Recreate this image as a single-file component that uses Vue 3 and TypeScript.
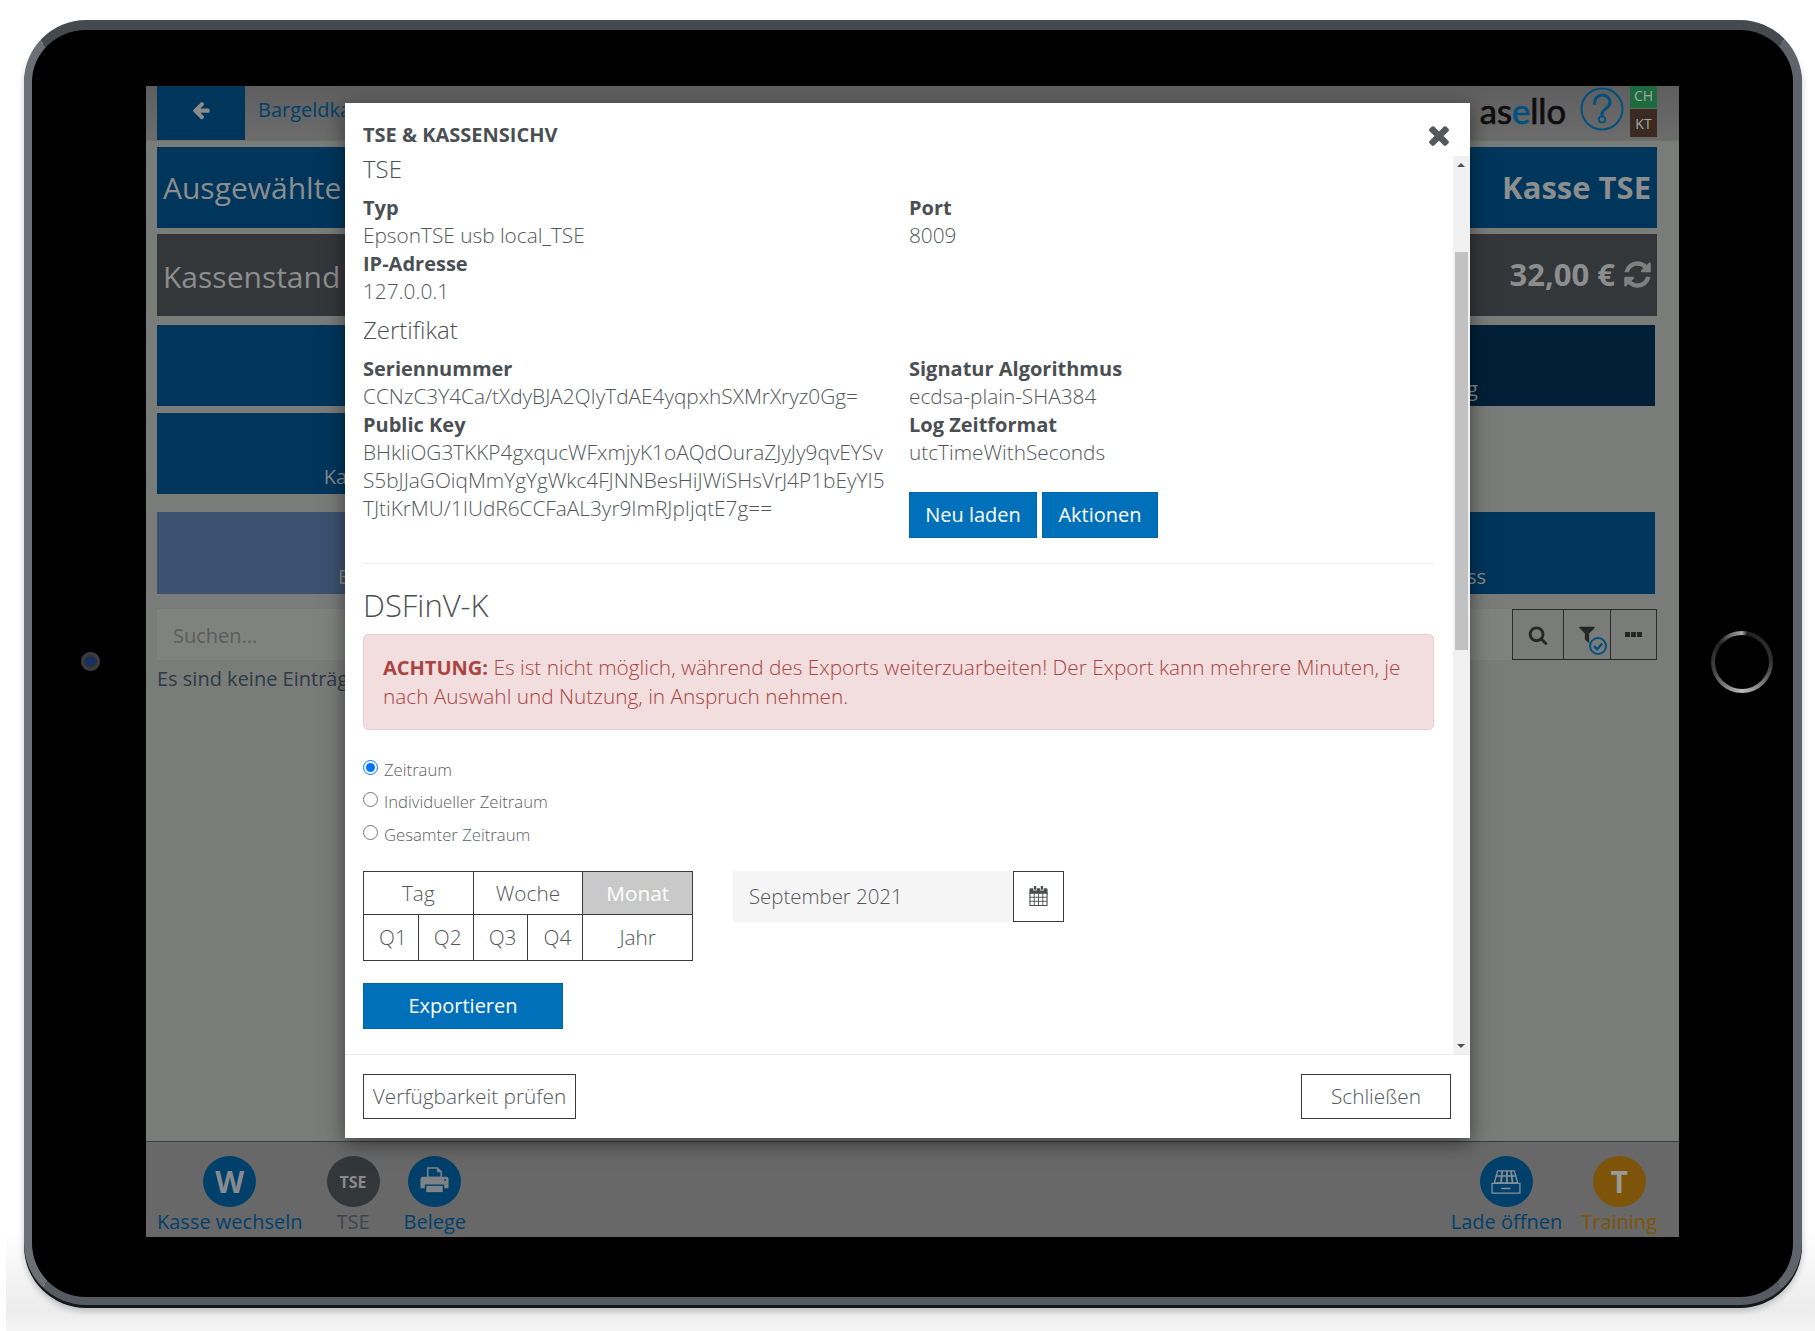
<script setup lang="ts">
const paths: Record<string, string> = {
  arrow: 'M1664 896v128q0 53-32.5 90.5t-84.5 37.5h-704l293 294q38 36 38 90t-38 90l-75 76q-37 37-90 37-52 0-91-37l-651-652q-37-37-37-90 0-52 37-91l651-650q38-38 91-38 52 0 90 38l75 74q38 38 38 91t-38 91l-293 293h704q52 0 84.5 37.5t32.5 90.5z',
  times: 'M1490 1322q0 40-28 68l-136 136q-28 28-68 28t-68-28l-294-294-294 294q-28 28-68 28t-68-28l-136-136q-28-28-28-68t28-68l294-294-294-294q-28-28-28-68t28-68l136-136q28-28 68-28t68 28l294 294 294-294q28-28 68-28t68 28l136 136q28 28 28 68t-28 68l-294 294 294 294q28 28 28 68z',
  refresh: 'M1639 1056q0 5-1 7-64 268-268 434.5t-478 166.5q-146 0-282.5-55t-243.5-157l-129 129q-19 19-45 19t-45-19-19-45v-448q0-26 19-45t45-19h448q26 0 45 19t19 45-19 45l-137 137q71 66 161 102t187 36q134 0 250-65t186-179q11-17 53-117 8-23 30-23h192q13 0 22.5 9.5t9.5 22.5zm25-800v448q0 26-19 45t-45 19h-448q-26 0-45-19t-19-45 19-45l138-138q-148-137-349-137-134 0-250 65t-186 179q-11 17-53 117-8 23-30 23h-199q-13 0-22.5-9.5t-9.5-22.5v-7q65-268 270-434.5t480-166.5q146 0 284 55.5t245 156.5l130-129q19-19 45-19t45 19 19 45z',
  search: 'M1216 832q0-185-131.5-316.5t-316.5-131.5-316.5 131.5-131.5 316.5 131.5 316.5 316.5 131.5 316.5-131.5 131.5-316.5zm512 832q0 52-38 90t-90 38q-54 0-90-38l-343-342q-179 124-399 124-143 0-273.5-55.5t-225-150-150-225-55.5-273.5 55.5-273.5 150-225 225-150 273.5-55.5 273.5 55.5 225 150 150 225 55.5 273.5q0 220-124 399l343 343q37 37 37 90z',
  filter: 'M1595 295q17 41-14 70l-493 493v742q0 42-39 59-13 5-25 5-27 0-45-19l-256-256q-19-19-19-45v-486l-493-493q-31-29-14-70 17-39 59-39h1280q42 0 59 39z',
}
const topPeriods = ['Tag', 'Woche', 'Monat']
const quarters = ['Q1', 'Q2', 'Q3', 'Q4', 'Jahr']
const radios = ['Zeitraum', 'Individueller Zeitraum', 'Gesamter Zeitraum']
</script>

<template>
  <div class="page">
    <div class="tablet">
      <div class="side"><span class="camera"></span></div>
      <div class="screen">
        <header class="bar">
          <div class="back">
            <svg viewBox="0 0 1792 1792" class="ic-back"><path :d="paths.arrow" /></svg>
          </div>
          <span class="crumb">Bargeldkasse</span>
          <div class="bar-right">
            <span class="logo">as<b>e</b>llo</span>
            <svg class="help" viewBox="0 0 44 44">
              <circle cx="22" cy="22" r="20.5" />
              <path d="M14.5 16.500c0-5 3.300-8.500 7.800-8.500s7.700 3 7.700 7c0 3-1.800 4.800-3.800 6.300-2.200 1.600-4.200 3-4.200 5.700v1" />
              <circle cx="22" cy="32.500" r="3.200" />
            </svg>
            <div class="badges">
              <span class="ch">CH</span>
              <span class="kt">KT</span>
            </div>
          </div>
        </header>

        <div class="strip blue">
          <span>Ausgewählte Kasse</span>
          <strong>Kasse TSE</strong>
        </div>
        <div class="strip dark">
          <span>Kassenstand</span>
          <strong class="amount">32,00 €
            <svg viewBox="0 0 1792 1792"><path :d="paths.refresh" /></svg>
          </strong>
        </div>

        <div class="tiles">
          <div class="tile"></div>
          <div class="tile"></div>
          <div class="tile deep">Kassenprüfung</div>
          <div class="tile">Kassenprotokolle</div>
          <div class="tile"></div>
          <div></div>
          <div class="tile pale">Bargeldzählen</div>
          <div class="tile"></div>
          <div class="tile">Kassenabschluss</div>
        </div>

        <div class="search">
          <div class="search-input">Suchen...</div>
          <div class="tools">
            <span class="tool t-search"><svg viewBox="0 0 1792 1792"><path :d="paths.search" /></svg></span>
            <span class="tool t-filter">
              <svg class="funnel" viewBox="0 0 1792 1792"><path :d="paths.filter" /></svg>
              <svg class="check" viewBox="0 0 20 20">
                <circle cx="10" cy="10" r="8" />
                <path d="M6 10.200l3 3 5.200-5.600" />
              </svg>
            </span>
            <span class="tool t-more"><i></i><i></i><i></i></span>
          </div>
        </div>
        <p class="empty">Es sind keine Einträge vorhanden</p>

        <footer class="dock">
          <div class="dock-group">
            <div class="dock-item"><span class="round navy big">W</span><span class="lbl">Kasse wechseln</span></div>
            <div class="dock-item"><span class="round slate small">TSE</span><span class="lbl grey">TSE</span></div>
            <div class="dock-item">
              <span class="round navy">
                <svg class="printer" viewBox="0 0 32 32">
                  <path d="M9 12V2h10l4 4v6z" fill="none" stroke="#7d8386" stroke-width="1.600" />
                  <path d="M18.500 2v4.500H23" fill="#7d8386" />
                  <path d="M4 11h24c1.500 0 2.500 1 2.500 2.500V23H26v-4H6v4H1.500v-9.500C1.500 12 2.500 11 4 11z" fill="#7d8386" />
                  <path d="M7.500 20.500h17V27h-17z" fill="#7d8386" />
                  <circle cx="27" cy="14.500" r="1" fill="#00406b" />
                </svg>
              </span>
              <span class="lbl">Belege</span>
            </div>
          </div>
          <div class="dock-group right">
            <div class="dock-item">
              <span class="round navy">
                <svg class="drawer" viewBox="0 0 32 28" fill="none" stroke="#8a9094" stroke-width="1.400">
                  <path d="M7 2h18l3.500 13h-25z" />
                  <path d="M12 2l-1.500 13M17 2v13M21.500 2l1.500 13M5 7.500h22" stroke-width="1.800" />
                  <path d="M1 15.500h30V26H1z" />
                  <path d="M11 21h10" stroke-width="1.600" />
                </svg>
              </span>
              <span class="lbl">Lade öffnen</span>
            </div>
            <div class="dock-item"><span class="round amber big">T</span><span class="lbl amber-t">Training</span></div>
          </div>
        </footer>

        <section class="modal">
          <div class="modal-head">
            <h4>TSE &amp; KASSENSICHV</h4>
            <svg viewBox="0 0 1792 1792" class="close"><path :d="paths.times" /></svg>
          </div>
          <div class="modal-mid">
            <div class="body">
              <h5 class="first">TSE</h5>
              <div class="cols tse">
                <div>
                  <dl>
                    <dt>Typ</dt><dd>EpsonTSE usb local_TSE</dd>
                    <dt>IP-Adresse</dt><dd>127.0.0.1</dd>
                  </dl>
                </div>
                <div>
                  <dl>
                    <dt>Port</dt><dd>8009</dd>
                  </dl>
                </div>
              </div>
              <h5 class="cert">Zertifikat</h5>
              <div class="cols">
                <div>
                  <dl>
                    <dt>Seriennummer</dt><dd>CCNzC3Y4Ca/tXdyBJA2QIyTdAE4yqpxhSXMrXryz0Gg=</dd>
                    <dt>Public Key</dt>
                    <dd>BHkliOG3TKKP4gxqucWFxmjyK1oAQdOuraZJyJy9qvEYSv<br />S5bJJaGOiqMmYgYgWkc4FJNNBesHiJWiSHsVrJ4P1bEyYI5<br />TJtiKrMU/1IUdR6CCFaAL3yr9ImRJpIjqtE7g==</dd>
                  </dl>
                </div>
                <div>
                  <dl>
                    <dt>Signatur Algorithmus</dt><dd>ecdsa-plain-SHA384</dd>
                    <dt>Log Zeitformat</dt><dd>utcTimeWithSeconds</dd>
                  </dl>
                  <div class="actions">
                    <button class="primary neu">Neu laden</button>
                    <button class="primary akt">Aktionen</button>
                  </div>
                </div>
              </div>
              <hr />
              <h3>DSFinV-K</h3>
              <div class="alert">
                <strong>ACHTUNG:</strong> Es ist nicht möglich, während des Exports weiterzuarbeiten! Der Export kann mehrere Minuten, je nach Auswahl und Nutzung, in Anspruch nehmen.
              </div>
              <div class="radios">
                <label v-for="(r, i) in radios" :key="r" class="radio">
                  <input type="radio" name="range" :checked="i === 0" />
                  <span>{{ r }}</span>
                </label>
              </div>
              <div class="period-row">
                <div class="period">
                  <span v-for="p in topPeriods" :key="p" class="cell wide" :class="{ on: p === 'Monat' }">{{ p }}</span>
                  <span v-for="q in quarters" :key="q" class="cell low" :class="{ wide: q === 'Jahr' }">{{ q }}</span>
                </div>
                <div class="date">
                  <div class="date-val">September 2021</div>
                  <span class="cal">
                    <svg viewBox="0 0 20 22">
                      <path fill="#4c4f52" d="M5 0h2.500v4H5zM12.500 0H15v4h-2.500z" />
                      <path fill="#4c4f52" d="M1.500 2.500h2.800v2.500h3.800V2.500h3.800V5h3.800V2.500h2.800A1.500 1.500 0 0 1 20 4v5H0V4a1.500 1.500 0 0 1 1.500-1.500z" />
                      <path fill="#fff" stroke="#4c4f52" stroke-width="1.200" d="M.6 8h18.800v13.400H.6z" />
                      <path fill="none" stroke="#4c4f52" stroke-width="1" d="M.6 12.400h18.800M.6 16.800h18.800M5.300 8v13.400M10 8v13.400M14.700 8v13.400" />
                    </svg>
                  </span>
                </div>
              </div>
              <button class="primary export">Exportieren</button>
            </div>
            <div class="scroll">
              <span class="up"></span>
              <span class="thumb"></span>
              <span class="down"></span>
            </div>
          </div>
          <div class="modal-foot">
            <button class="ghost check-btn">Verfügbarkeit prüfen</button>
            <button class="ghost close-btn">Schließen</button>
          </div>
        </section>
      </div>
      <div class="side"><span class="home"></span></div>
    </div>
  </div>
</template>

<style>
html, body { margin: 0; background: #fff; }
</style>

<style scoped>
* { box-sizing: border-box; }
.page {
  position: relative;
  height: 1331px;
  padding: 20px 13px 0 24px;
  overflow: hidden;
  font-family: "Open Sans", "Noto Sans", sans-serif;
  background: #fff;
}
.page::after {
  content: "";
  position: absolute;
  left: 6px;
  right: 0;
  top: 1230px;
  bottom: 0;
  background: linear-gradient(#fff 0, #ececec 80px, #f4f4f4 100%);
}
.tablet {
  position: relative;
  z-index: 1;
  width: 1778px;
  height: 1285px;
  background: #000;
  border-style: solid;
  border-color: #454a4f #5e646a #565b61 #6a7076;
  border-width: 10px 9px 8px 8px;
  border-radius: 62px;
  box-shadow: 0 3px 0 #15181b, 0 6px 6px rgba(0, 0, 0, .22);
  display: grid;
  grid-template-columns: 114px 1533px 1fr;
  align-items: start;
}
.side {
  height: 1151px;
  margin-top: 56px;
  display: flex;
  align-items: center;
  justify-content: center;
}
.side:first-child { justify-content: flex-start; padding-left: 49px; }
.side:last-child { justify-content: flex-start; padding-left: 32px; }
.camera {
  width: 19px;
  height: 19px;
  border-radius: 50%;
  background: radial-gradient(circle, #12306e 0 3px, #1a2b55 4px, #2c2f33 5px, #54575a 100%);
}
.home {
  width: 62px;
  height: 62px;
  border-radius: 50%;
  background: #000;
  border: 4px solid transparent;
  background-image: linear-gradient(#000, #000), conic-gradient(from 10deg, #222 0deg, #333 80deg, #bbb 170deg, #444 240deg, #222 300deg, #aaa 350deg, #222 360deg);
  background-origin: border-box;
  background-clip: padding-box, border-box;
}

.screen {
  position: relative;
  height: 1151px;
  margin-top: 56px;
  background: #7a7c7a;
  display: flex;
  flex-direction: column;
  color: #8c8e8e;
}

.bar {
  height: 55px;
  flex: none;
  background: linear-gradient(#5e5e5e, #6c6c6c);
  border-bottom: 1px solid #6f716f;
  display: flex;
  align-items: flex-start;
  padding: 0 22px 0 11px;
}
.back {
  width: 88px;
  height: 54px;
  background: #00365c;
  display: flex;
  align-items: center;
  justify-content: center;
  padding-bottom: 7px;
}
.ic-back { width: 20px; height: 20px; fill: #8a8c8c; }
.crumb {
  margin-left: 13px;
  font-size: 20px;
  line-height: 48px;
  color: #02406c;
}
.bar-right {
  margin-left: auto;
  display: flex;
  align-items: flex-start;
}
.logo {
  font-family: "Lato", sans-serif;
  font-size: 34.500px;
  line-height: 49px;
  color: #0d0d0d;
  -webkit-text-stroke: .7px currentColor;
  margin-right: 14px;
}
.logo b { font-weight: 400; color: #00517f; }
.help {
  width: 44px;
  height: 44px;
  margin-top: 1px;
  margin-right: 6px;
}
.help circle:first-child { fill: none; stroke: #01507f; stroke-width: 2; }
.help path { fill: none; stroke: #01507f; stroke-width: 3; stroke-linecap: round; }
.help circle:last-child { fill: none; stroke: #01507f; stroke-width: 1.800; }
.badges { display: flex; flex-direction: column; width: 27px; gap: 1px; }
.badges span {
  display: flex;
  align-items: center;
  justify-content: center;
  font-size: 14px;
  color: #a3a9a3;
}
.ch { height: 22px; background: #1d6a3f; padding-bottom: 3px; }
.kt { height: 28px; background: #3a2a22; }

.strip {
  flex: none;
  margin: 6px 22px 0 11px;
  display: flex;
  align-items: center;
  justify-content: space-between;
  padding: 0 6px 0 6px;
  font-size: 30px;
  color: #8c8e8e;
}
.strip strong { font-weight: 700; font-size: 31px; }
.blue { height: 81px; background: #00365c; }
.blue strong { margin-top: -2px; }
.dark { height: 82px; background: #34373a; padding-right: 4px; }
.dark > span { padding-top: 2px; }
.amount { display: flex; align-items: center; gap: 7px; margin-top: -2px; }
.amount svg { width: 31px; height: 31px; fill: #7e8080; }

.tiles {
  flex: none;
  display: grid;
  grid-template-columns: repeat(3, 495px);
  column-gap: 6.500px;
  grid-template-rows: 81px 81px 93px;
  row-gap: 7px;
  margin: 9px 0 0 11px;
}
.tile {
  background: #00365c;
  color: #878a8c;
  font-size: 20px;
  display: flex;
  align-items: flex-end;
  justify-content: center;
  padding-bottom: 2px;
  line-height: 30px;
}
.tiles > div:nth-child(7), .tiles > div:nth-child(8), .tiles > div:nth-child(9) { margin-top: 11px; }
.deep { background: #012038; }
.pale { background: #3d5270; }

.search {
  flex: none;
  margin: 15px 22px 0 11px;
  height: 51px;
  display: flex;
}
.search-input {
  flex: 1;
  background: #808280;
  color: #5c5c5c;
  font-size: 20px;
  line-height: 53px;
  padding-left: 16px;
}
.tools {
  width: 145px;
  display: grid;
  grid-template-columns: 50px 47px 1fr;
  border: 1px solid #2a2a2a;
}
.tool {
  position: relative;
  display: flex;
  align-items: center;
  justify-content: center;
}
.tool + .tool { border-left: 1px solid #2a2a2a; }
.t-search svg { width: 20px; height: 20px; fill: #262626; }
.funnel { position: absolute; left: 13px; top: 14px; width: 20px; height: 20px; fill: #262626; }
.check { position: absolute; left: 24px; top: 26px; width: 20px; height: 20px; }
.check circle { fill: #7a7c7a; stroke: #01507f; stroke-width: 2; }
.check path { fill: none; stroke: #01507f; stroke-width: 2.400; }
.t-more { gap: 1px; }
.t-more i { width: 5px; height: 5px; background: #262626; }

.empty {
  flex: 1;
  margin: 5px 0 0 11px;
  font-size: 20px;
  line-height: 28px;
  color: #2f3a44;
}

.dock {
  height: 96px;
  flex: none;
  border-top: 1px solid #3c3f40;
  background: #686868;
  display: flex;
  justify-content: space-between;
  padding: 14px 22px 0 11px;
}
.dock-group { display: flex; gap: 24px; }
.dock-group.right { gap: 19px; }
.dock-item { display: flex; flex-direction: column; align-items: center; }
.round {
  width: 53px;
  height: 53px;
  border-radius: 50%;
  display: flex;
  align-items: center;
  justify-content: center;
  color: #878b8e;
  font-weight: 700;
}
.navy { background: #00406b; }
.slate { background: #34373a; }
.amber { background: #7d5409; color: #9a9a96; }
.big { font-size: 30px; }
.small { font-size: 16px; }
.lbl {
  font-size: 20px;
  line-height: 30px;
  color: #02406c;
}
.lbl.grey { color: #3f4549; }
.amber-t { color: #7d5409; }
.printer { width: 31px; height: 31px; }
.drawer { width: 30px; height: 26px; }

.modal {
  position: absolute;
  left: 199px;
  top: 17px;
  width: 1125px;
  height: 1035px;
  background: #fff;
  box-shadow: 0 5px 20px rgba(0, 0, 0, .5);
  display: flex;
  flex-direction: column;
  color: #53575b;
  font-weight: 300;
}
.modal-head {
  flex: none;
  height: 53px;
  padding: 0 16px 0 18px;
  display: flex;
  align-items: center;
  justify-content: space-between;
}
h4 {
  margin: 11px 0 0;
  font-size: 20px;
  line-height: 28px;
  font-weight: 700;
  color: #4a4f54;
}
.close { width: 30px; height: 30px; fill: #55595c; margin-top: 10px; }
.modal-mid {
  flex: 1;
  min-height: 0;
  display: flex;
}
.body {
  width: 1108px;
  flex: none;
  padding: 0 19px 0 18px;
  font-size: 20.800px;
  line-height: 28px;
}
h5 {
  margin: 0;
  font-size: 24px;
  line-height: 28px;
  font-weight: 300;
  color: #4d5155;
}
.first { line-height: 26px; }
.cert { margin-top: 10px; }
.cols {
  display: grid;
  grid-template-columns: 526px 1fr;
  column-gap: 20px;
  margin-top: 11px;
}
.tse { margin-top: 12px; }
dl { margin: 0; }
dt { font-weight: 700; font-size: 20px; color: #4a4f54; }
dd { margin: 0; white-space: nowrap; position: relative; top: -1px; }
.actions { display: flex; gap: 5px; margin-top: 25px; }
.primary {
  font: inherit;
  font-size: 20px;
  font-weight: 400;
  height: 46px;
  color: #fff;
  background: #0070ba;
  border: 1px solid #0064a8;
  padding: 0;
  line-height: 44px;
}
.neu { width: 128px; }
.akt { width: 116px; }
hr {
  margin: 25px 0 0;
  border: 0;
  border-top: 1px solid #edeff1;
}
h3 {
  margin: 20px 0 0;
  font-size: 31px;
  line-height: 42px;
  font-weight: 300;
  color: #4d5155;
}
.alert {
  margin-top: 8px;
  height: 96px;
  padding: 18px 19px;
  background: #f2dede;
  border: 1px solid #ebccd1;
  border-radius: 5px;
  color: #a94442;
}
.alert strong { font-weight: 700; font-size: 20px; }
.radios { margin-top: 23px; }
.radio {
  display: flex;
  align-items: center;
  height: 32.500px;
  font-size: 16.700px;
  color: #5a5e62;
}
.radio input {
  width: 15px;
  height: 15px;
  margin: -4px 6px 0 0;
}
.radio span { margin-top: 1px; }
.period-row { display: flex; gap: 40px; margin-top: 20px; align-items: flex-start; }
.period {
  width: 330px;
  display: grid;
  grid-template-columns: repeat(6, 1fr);
  grid-template-rows: 42px 45px;
  gap: 1px;
  padding: 1px;
  background: #3a3a3a;
}
.cell {
  background: #fff;
  display: flex;
  align-items: center;
  justify-content: center;
  color: #53575b;
}
.low:not(.wide) { padding-left: 4px; }
.wide { grid-column: span 2; }
.on { background: #c9c9c9; color: #fff; font-weight: 400; }
.date { display: flex; margin-top: 0; }
.date-val {
  width: 280px;
  height: 51px;
  background: #f5f5f5;
  line-height: 51px;
  padding-left: 16px;
  font-size: 20.400px;
}
.cal {
  width: 51px;
  height: 51px;
  border: 1px solid #3a3a3a;
  display: flex;
  align-items: center;
  justify-content: center;
}
.cal svg { width: 19px; height: 20px; }
.export { width: 200px; margin-top: 22px; display: block; }
.scroll {
  position: relative;
  width: 17px;
  background: #f1f1f1;
  flex: none;
}
.thumb {
  position: absolute;
  left: 2px;
  right: 2px;
  top: 96px;
  height: 398px;
  background: #c1c1c1;
}
.up, .down {
  position: absolute;
  left: 4px;
  width: 0;
  height: 0;
  border-left: 4px solid transparent;
  border-right: 4px solid transparent;
}
.up { top: 7px; border-bottom: 4px solid #505050; }
.down { bottom: 6px; border-top: 4px solid #505050; }
.modal-foot {
  flex: none;
  height: 84px;
  border-top: 1px solid #e9ecef;
  padding: 19px 19px 0 18px;
  display: flex;
  justify-content: space-between;
  align-items: flex-start;
}
.ghost {
  font: inherit;
  font-size: 20.800px;
  font-weight: 300;
  height: 45px;
  background: #fff;
  color: #53575b;
  border: 1px solid #3a3a3a;
  padding: 0 0 2px;
}
.check-btn { width: 213px; }
.close-btn { width: 150px; }
</style>
